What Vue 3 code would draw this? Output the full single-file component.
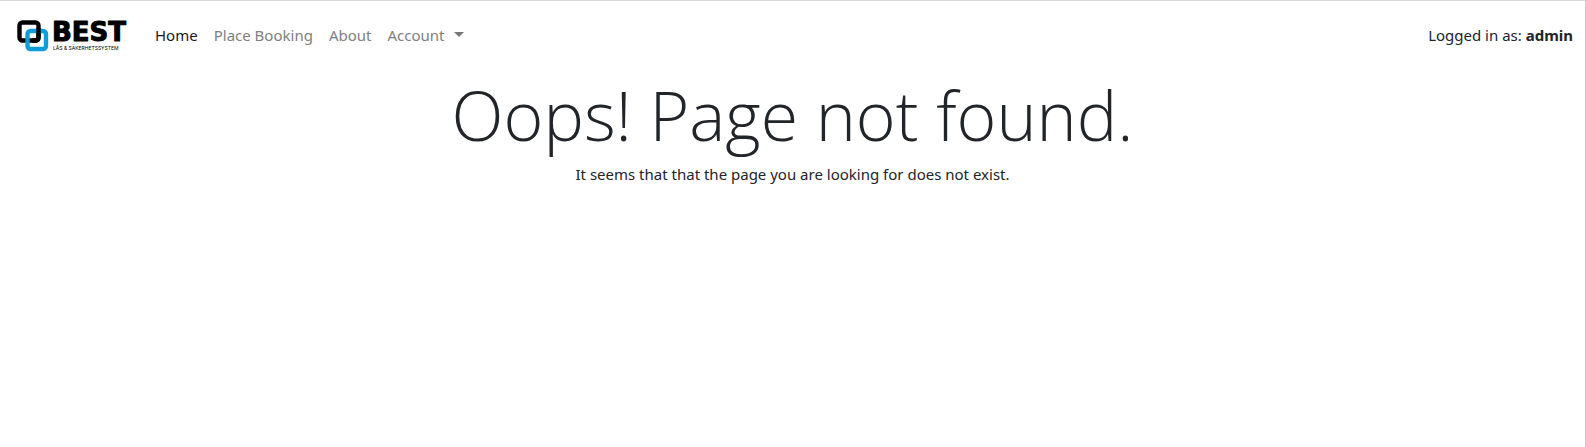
<script setup>
const links = [
  { label: 'Home', active: true },
  { label: 'Place Booking', active: false },
  { label: 'About', active: false },
]
</script>

<template>
  <div class="page">
    <header class="navbar">
      <a class="brand" href="#" aria-label="BEST Lås &amp; Säkerhetssystem">
        <svg width="112" height="34" viewBox="0 0 112 34">
          <rect x="3.5" y="4.5" width="19" height="18" rx="3" fill="none" stroke="#000" stroke-width="4.4" />
          <rect x="11.5" y="13" width="18.5" height="18" rx="3" fill="none" stroke="#0f9bdc" stroke-width="4.4" />
          <path d="M16 22.5H19.5Q22.5 22.5 22.5 19.5V10" fill="none" stroke="#000" stroke-width="4.4" />
          <text class="word" x="36" y="23">BEST</text>
          <text class="tag" x="37" y="32">LÅS &amp; SÄKERHETSSYSTEM</text>
        </svg>
      </a>
      <nav class="links">
        <a v-for="l in links" :key="l.label" href="#" class="link" :class="{ active: l.active }">{{ l.label }}</a>
        <button type="button" class="link toggle">Account<span class="caret"></span></button>
      </nav>
      <div class="user">Logged in as: <strong>admin</strong></div>
    </header>
    <main class="content">
      <h1>Oops! Page not found.</h1>
      <p>It seems that that the page you are looking for does not exist.</p>
    </main>
  </div>
</template>

<style>
body {
  background: #fff;
}
</style>

<style scoped>
.page {
  box-sizing: border-box;
  min-height: 100vh;
  border-top: 1px solid #d8d8d8;
  border-right: 1px solid #c8c8c8;
  font-family: "Noto Sans", "Open Sans", sans-serif;
  font-size: 15px;
  line-height: 24px;
  color: #212529;
}
.navbar {
  display: flex;
  align-items: center;
  padding: 17px 12px 15px 16px;
}
.brand {
  display: flex;
  margin-right: 19px;
}
.word {
  font: bold 26px "DejaVu Sans", sans-serif;
  stroke: #000;
  stroke-width: 1px;
  stroke-linejoin: round;
}
.tag {
  font: 400 5px "Inter", sans-serif;
}
.links {
  display: flex;
  flex: 1;
}
.link {
  padding: 4px 8px;
  border: 0;
  background: none;
  font: inherit;
  color: #808080;
  text-decoration: none;
}
.link.active {
  color: #1a1a1a;
}
.toggle {
  display: flex;
  align-items: center;
  gap: 10px;
}
.caret {
  margin-bottom: 2px;
  border: 5px solid transparent;
  border-top-color: #777;
  border-bottom: 0;
}
.content {
  text-align: center;
}
h1 {
  margin: 6px 0 5px;
  font-family: "Open Sans", "Noto Sans", sans-serif;
  font-size: 68px;
  font-weight: 300;
  line-height: 84px;
}
p {
  margin: 0;
}
</style>
